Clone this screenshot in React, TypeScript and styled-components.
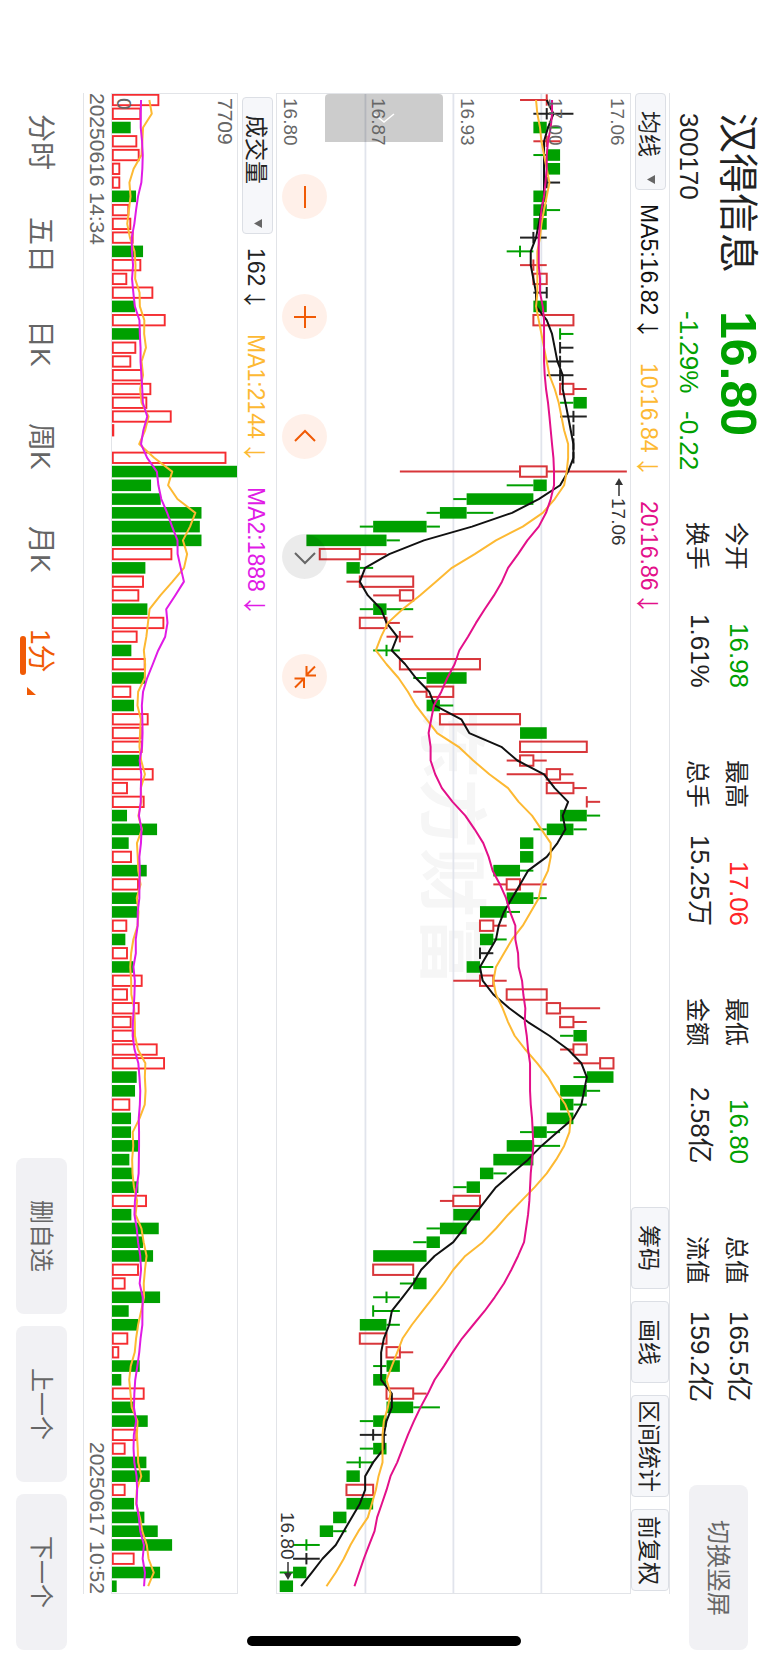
import React from "react";
import styled, { createGlobalStyle } from "styled-components";

/* The phone is held in landscape: every line of text runs top to bottom and
   blocks stack from right to left, so the page uses a sideways writing mode. */

const GREEN = "#00a000";
const RED = "#ff2426";
const CANDLE_RED = "#d8363a";
const AMBER = "#fdb933";
const PINK = "#e3108a";
const MAGENTA = "#e01be6";
const ORANGE = "#f05a05";
const INK = "#222222";
const GREY = "#666666";
const LINE = "#e2e4e8";

const GlobalStyle = createGlobalStyle`
  * { box-sizing: border-box; }
  html, body { margin: 0; padding: 0; background: #ffffff; }
  button, select {
    margin: 0;
    font: inherit;
    color: inherit;
    writing-mode: inherit;
    text-orientation: inherit;
    cursor: pointer;
  }
`;

const Page = styled.div`
  position: relative;
  display: flex;
  flex-direction: column;
  writing-mode: vertical-rl;
  text-orientation: sideways;
  width: 100%;
  height: 100vh;
  min-height: 1640px;
  min-width: 700px;
  background: #ffffff;
  color: ${INK};
  font-family: "Liberation Sans", "Noto Sans CJK SC", sans-serif;
  font-size: 24px;
  line-height: 1;
  white-space: nowrap;
`;

/* ---------- quote header ---------- */

const Header = styled.header`
  display: flex;
  align-items: flex-start;
  flex: 0 0 98px;
  padding-top: 113px;
  padding-bottom: 13px;
`;

const Identity = styled.div`
  display: grid;
  grid-template-columns: 198px auto;
  grid-template-rows: 60px 38px;
  flex: 0 0 409px;
`;

const StockName = styled.h1`
  margin: 0;
  font-size: 40px;
  font-weight: 400;
  line-height: 60px;
`;

const LastPrice = styled.strong`
  color: ${GREEN};
  font-size: 50px;
  font-weight: 700;
  line-height: 60px;
`;

const SubText = styled.span<{ $color?: string }>`
  display: flex;
  gap: 18px;
  color: ${(p) => p.$color || INK};
  font-size: 26px;
  line-height: 38px;
`;

const Stats = styled.div`
  display: flex;
  gap: 72px;
  margin-right: 10px;
`;

const StatGroup = styled.dl`
  height: 166px;
  margin: 0;
`;

const Stat = styled.div`
  display: flex;
  justify-content: space-between;
  line-height: 39px;
`;

const StatLabel = styled.dt`
  padding-right: 4px;
  font-size: 24px;
  line-height: 35px;
`;

const StatValue = styled.dd<{ $color?: string }>`
  margin: 0;
  color: ${(p) => p.$color || INK};
  font-size: 26px;
`;

const SoftButton = styled.button<{ $thick: number }>`
  width: ${(p) => p.$thick}px;
  padding: 0 2px 0 0;
  border: 0;
  border-radius: 8px;
  background: #f1f1f4;
  color: ${GREY};
  font-size: 24px;
`;

const RotateButton = styled(SoftButton)`
  height: 165px;
  margin-top: auto;
  margin-right: 20px;
`;

/* ---------- charts ---------- */

const Main = styled.main`
  display: flex;
  flex-direction: column;
  flex: 1 1 0;
  margin-top: 93px;
  margin-bottom: 69px;
  border-right: 1px solid ${LINE};
  border-left: 1px solid ${LINE};
`;

const Toolbar = styled.div`
  display: flex;
  align-items: center;
  flex: 0 0 38px;
  font-size: 23px;
`;

const SelectBox = styled.label<{ $length: number; $start: number }>`
  position: relative;
  display: block;
  width: 31px;
  height: ${(p) => p.$length}px;
  margin-top: ${(p) => p.$start}px;
  margin-bottom: 14px;
`;

const Select = styled.select`
  appearance: none;
  width: 100%;
  height: 100%;
  padding: 17px 4px 0 0;
  border: 1px solid #dcdfe5;
  border-radius: 4px;
  background: #f6f7fa;
  font-size: 23px;
  line-height: 25px;
`;

const Caret = styled.svg`
  position: absolute;
  bottom: 6px;
  left: 12px;
  width: 8px;
  height: 9px;
  pointer-events: none;
`;

const Reading = styled.span<{ $color: string }>`
  display: flex;
  align-items: center;
  gap: 2px;
  padding-right: 4px;
  margin-bottom: 23px;
  color: ${(p) => p.$color};
`;

const Arrow = styled.span`
  font-family: "Noto Sans CJK SC", sans-serif;
`;

const ToolButtons = styled.div`
  display: flex;
  align-self: stretch;
  gap: 12px;
  margin-top: auto;
  margin-bottom: 3px;
`;

const ToolButton = styled.button`
  width: 38px;
  min-height: 82px;
  padding: 4px 4px 4px 0;
  border: 1px solid #dcdfe5;
  border-radius: 4px;
  background: #f6f7fa;
  font-size: 23px;
`;

const Plot = styled.section<{ $share: number }>`
  position: relative;
  flex: ${(p) => p.$share} 1 0;
  border: 1px solid ${LINE};
`;

const Drawing = styled.svg`
  position: absolute;
  inset: 0;
  width: 100%;
  height: 100%;
`;

const Watermark = styled.div`
  position: absolute;
  inset: 0;
  display: flex;
  align-items: center;
  justify-content: center;
  padding: 8px 6px 0 0;
  color: #f6f6f6;
  font-size: 69px;
  font-weight: 700;
`;

const Scale = styled.div`
  position: absolute;
  inset: 0;
  display: flex;
  flex-direction: column;
  padding-top: 4px;
  color: ${GREY};
  font-size: 19px;
  line-height: 26px;
  pointer-events: none;
`;

const Band = styled.div`
  display: flex;
  flex-direction: column;
  justify-content: space-between;
  flex: 1 1 0;

  &:not(:first-child) {
    justify-content: flex-end;
  }
`;

const VolumeScale = styled(Scale)`
  justify-content: space-between;
  font-size: 21px;
  line-height: 24px;
`;

const Handle = styled.button`
  position: absolute;
  top: 0;
  right: 187px;
  display: flex;
  align-items: center;
  justify-content: center;
  width: 118px;
  height: 48px;
  padding: 0;
  border: 0;
  border-radius: 4px 4px 0 0;
  background: rgba(0, 0, 0, 0.2);
`;

const Controls = styled.div`
  position: absolute;
  top: 80px;
  left: 5px;
  display: flex;
  gap: 75px;
`;

const RoundButton = styled.button<{ $muted?: boolean }>`
  display: flex;
  align-items: center;
  justify-content: center;
  width: 45px;
  height: 45px;
  padding: 0;
  border: 0;
  border-radius: 50%;
  background: ${(p) => (p.$muted ? "rgba(0, 0, 0, 0.08)" : "rgba(252, 92, 10, 0.09)")};
  color: ${(p) => (p.$muted ? GREY : ORANGE)};
`;

const Marker = styled.div`
  position: absolute;
  display: flex;
  align-items: center;
  gap: 2px;
  color: #333333;
  font-size: 19px;
`;

const HighMarker = styled(Marker)`
  top: 25.6%;
  right: 2px;
`;

const LowMarker = styled(Marker)`
  bottom: 13px;
  left: 1px;
`;

const Dates = styled.div`
  display: flex;
  justify-content: space-between;
  flex: 0 0 27px;
  color: ${GREY};
  font-size: 21px;
  line-height: 27px;
`;

/* ---------- period tabs ---------- */

const Footer = styled.footer`
  display: flex;
  align-items: center;
  justify-content: space-between;
  flex: 0 0 83px;
  padding-top: 114px;
  padding-bottom: 13px;
`;

const Tabs = styled.nav`
  display: flex;
  gap: 47px;
  padding-right: 4px;
`;

const Tab = styled.button<{ $active?: boolean }>`
  position: relative;
  height: 56px;
  padding: 0;
  border: 0;
  background: none;
  color: ${(p) => (p.$active ? ORANGE : GREY)};
  font-size: 28px;
  line-height: 32px;
  text-align: start;
`;

const Underline = styled.span`
  position: absolute;
  top: 7px;
  left: -4px;
  width: 6px;
  height: 39px;
  border-radius: 3px;
  background: ${ORANGE};
`;

const Corner = styled.svg`
  position: absolute;
  top: 58px;
  left: 3px;
  width: 9px;
  height: 8px;
`;

const Actions = styled.div`
  display: flex;
  gap: 12px;
`;

const ActionButton = styled(SoftButton)`
  height: 156px;
`;

const HomeBar = styled.div`
  position: absolute;
  bottom: 17px;
  left: 50%;
  width: 274px;
  height: 10px;
  margin-left: -137px;
  border-radius: 5px;
  background: #000000;
`;

/* ---------- data ---------- */

/* colour, low, body bottom, body top, high, all in cents above 16.80 */
type Candle = [string, number, number, number, number];

const candles: Candle[] = `
r18,20,20,20 k19,20,20,22 g19,19,20,21 r19,20,20,21 g19,20,21,21 g20,20,21,21 k20,20,20,21 g19,19,20,20
g19,19,20,21 g19,19,20,20 k18,19,19,20 g17,18,18,19 r18,19,19,20 r19,19,20,20 k19,20,20,20 g19,19,20,20
r19,19,22,22 g21,21,21,22 k21,21,21,22 k20,21,21,22 k20,21,21,22 r21,21,22,23 g21,22,23,23 k21,22,22,23
k22,22,22,22 k22,22,22,22 k22,22,22,22 r9,18,20,26 g17,19,20,20 g13,14,19,19 g11,12,14,16 g6,7,11,12
g2,2,8,9 r3,3,6,8 g5,5,6,7 r5,6,10,10 r7,9,10,10 g6,7,8,10 r6,6,8,9 r8,9,9,10
g7,8,8,9 r9,9,15,15 g10,11,14,14 r10,11,13,13 g11,11,12,13 r12,12,18,18 g18,18,20,20 r18,18,23,23
r17,18,19,20 r17,20,21,22 r20,20,22,23 r23,23,23,24 g21,21,23,24 g19,20,22,23 g18,18,19,19 g18,18,19,19
g16,16,18,19 r16,17,18,20 g17,17,19,20 g15,15,17,18 r15,15,16,17 g15,15,16,17 k15,15,15,16 g14,14,15,16
r13,15,16,17 r17,17,20,20 r20,20,21,24 r21,21,22,23 g21,22,23,23 r21,22,23,23 r22,24,25,25 g22,23,25,25
g21,21,23,24 g21,21,22,23 g20,20,22,22 g18,19,20,21 g17,17,19,21 g16,16,19,19 g15,15,16,17 g13,14,15,15
r12,13,15,15 g13,13,15,15 g11,12,14,14 g10,11,12,12 g7,7,11,11 r7,7,10,10 g9,10,11,11 g7,8,8,9
g7,7,7,9 g6,6,8,9 r6,6,8,8 r8,8,9,10 g7,8,9,9 g7,7,8,8 r8,8,10,11 g8,8,10,12
g6,7,8,8 k6,7,7,8 g6,7,8,8 g5,6,6,7 g5,5,6,6 r5,5,7,7 g5,5,7,7 g4,4,5,5
g3,3,4,5 g1,2,2,3 k1,2,2,3 g0,1,2,2 g0,0,1,1`
  .trim()
  .split(/\s+/)
  .map((s) => [s[0], ...s.slice(1).split(",").map(Number)] as Candle);

/* direction and traded volume, in units where the 7709 peak is 375 */
type Volume = [string, number];

const volumes: Volume[] = `
r141 r87 g56 r75 r82 r24 r24 g72 r51 r57 r64 g93 r87 r45 r123 g69 r160 g85 r72 r57 r91 r117 r105 r178 r6 r0
r342 g375 g117 g146 g268 g263 g268 r180 g100 r95 r81 g106 r156 r76 g58 r100 g100 r57 g66 r109 r88 r91 g82
r124 r47 r97 g45 g135 g50 r59 g104 r80 g77 g77 r45 g40 r47 g64 r91 r47 r82 r58 r66 r136 r158 g74 g69 r54
g57 g57 g81 g52 g60 g79 r104 g58 g140 g93 g123 r80 r40 g144 g50 g78 r48 r21 g83 g28 r97 g67 g107 r75 r40
g103 g113 r40 g66 g97 g137 g180 r67 g144 g14`
  .trim()
  .split(/\s+/)
  .map((s) => [s[0], Number(s.slice(1))] as Volume);

const LENGTH = 1501;
const rowY = (i: number) => 6 + i * 13.78;
const priceX = (cents: number) => 2.7 + cents * 13.36;
const volumeX = (v: number) => v / 3;

/* The first points need bars from before the visible range, so they are given. */
const average = (values: number[], span: number, lead: number[]) =>
  values.map((_, i) =>
    i < lead.length
      ? lead[i]
      : values.slice(i - span + 1, i + 1).reduce((a, b) => a + b, 0) / span
  );

const toPoints = (values: number[], scale: (v: number) => number) =>
  values.map((v, i) => `${scale(v).toFixed(1)},${rowY(i).toFixed(1)}`).join(" ");

const closes = candles.map((c) => (c[0] === "r" ? c[3] : c[2]));
const traded = volumes.map((v) => v[1]);

const ma5 = average(closes, 5, [20, 20.5, 20.1, 19.8]);
const ma10 = average(closes, 10, [19.2, 19.3, 19.5, 19.6, 19.8, 20, 20.2, 20, 19.8]);
const ma20 = average(closes, 20, [
  20.4, 20.4, 20.3, 20.1, 20, 20, 19.9, 19.8, 19.6, 19.5, 19.4, 19.4, 19.4, 19.5, 19.5, 19.7, 19.8, 19.8, 19.8,
]);
const volumeMa1 = average(traded, 5, [112, 119, 93, 91]);
const volumeMa2 = average(traded, 10, [87, 86, 86, 90, 92, 91, 88, 78, 72]);

const candleColor: Record<string, string> = { r: CANDLE_RED, g: GREEN, k: "#222222" };

function PriceDrawing() {
  return (
    <Drawing viewBox={`0 0 353 ${LENGTH}`} preserveAspectRatio="none" aria-hidden="true">
      {[88.5, 176.5, 264.5].map((x) => (
        <line key={x} x1={x} x2={x} y1={0} y2={LENGTH} stroke="#e1e4ec" strokeWidth={1.8} />
      ))}
      {candles.map(([kind, low, bottom, top, high], i) => {
        const y = rowY(i);
        const color = candleColor[kind];
        return (
          <g key={i} stroke={color} strokeWidth={2} fill="none">
            {low < bottom && <line x1={priceX(low)} x2={priceX(bottom)} y1={y} y2={y} />}
            {high > top && <line x1={priceX(top)} x2={priceX(high)} y1={y} y2={y} />}
            {bottom === top && <line x1={priceX(top)} x2={priceX(top)} y1={y - 5.7} y2={y + 5.7} />}
            {bottom < top && kind === "r" && (
              <rect x={priceX(bottom)} y={y - 5.2} width={priceX(top) - priceX(bottom)} height={10.4} />
            )}
            {bottom < top && kind !== "r" && (
              <rect
                x={priceX(bottom)}
                y={y - 5.8}
                width={priceX(top) - priceX(bottom)}
                height={11.6}
                fill={color}
                stroke="none"
              />
            )}
          </g>
        );
      })}
      <g fill="none" strokeWidth={2} strokeLinejoin="round">
        <polyline points={toPoints(ma5, priceX)} stroke="#111111" />
        <polyline points={toPoints(ma10, priceX)} stroke={AMBER} />
        <polyline points={toPoints(ma20, priceX)} stroke={PINK} />
      </g>
    </Drawing>
  );
}

function VolumeDrawing() {
  return (
    <Drawing viewBox={`0 0 125 ${LENGTH}`} preserveAspectRatio="none" aria-hidden="true">
      {volumes.map(([kind, v], i) => {
        const y = rowY(i);
        if (v === 0) return null;
        return kind === "r" ? (
          <rect
            key={i}
            x={0.8}
            y={y - 5.2}
            width={Math.max(volumeX(v) - 1.5, 0.5)}
            height={10.4}
            fill="none"
            stroke="#f52c30"
            strokeWidth={1.9}
          />
        ) : (
          <rect key={i} x={0} y={y - 5.8} width={volumeX(v)} height={11.6} fill={GREEN} />
        );
      })}
      <g fill="none" strokeWidth={2} strokeLinejoin="round">
        <polyline points={toPoints(volumeMa1, volumeX)} stroke={AMBER} />
        <polyline points={toPoints(volumeMa2, volumeX)} stroke={MAGENTA} />
      </g>
    </Drawing>
  );
}

/* ---------- icons ---------- */

function Glyph({ d }: { d: string }) {
  return (
    <svg width="24" height="24" viewBox="0 0 24 24" fill="none" stroke="currentColor" strokeWidth="2" aria-hidden="true">
      <path d={d} />
    </svg>
  );
}

const controls = [
  { name: "缩小", d: "M12 1v22" },
  { name: "放大", d: "M12 1v22M1 12h22" },
  { name: "左移", d: "M2 16 12 6l10 10" },
  { name: "右移", d: "M2 8l10 10L22 8", muted: true },
  { name: "收起", d: "M22 1.5 13.5 10M13.5 1v9.5h9.5M2 22.5l8.5-8.5M1.5 13.5H11V23" },
];

const stats = [
  [{ label: "今开", value: "16.98", color: GREEN }, { label: "换手", value: "1.61%" }],
  [{ label: "最高", value: "17.06", color: RED }, { label: "总手", value: "15.25万" }],
  [{ label: "最低", value: "16.80", color: GREEN }, { label: "金额", value: "2.58亿" }],
  [{ label: "总值", value: "165.5亿" }, { label: "流值", value: "159.2亿" }],
] as { label: string; value: string; color?: string }[][];

function Dropdown({ label, length, start }: { label: string; length: number; start: number }) {
  return (
    <SelectBox $length={length} $start={start}>
      <Select aria-label={label} defaultValue={label}>
        <option>{label}</option>
      </Select>
      <Caret viewBox="0 0 8 9" aria-hidden="true">
        <path d="M8 0v9L0 4.5z" fill={GREY} />
      </Caret>
    </SelectBox>
  );
}

function Trend({ text, color }: { text: string; color: string }) {
  return (
    <Reading $color={color}>
      <span>{text}</span>
      <Arrow>↓</Arrow>
    </Reading>
  );
}

export default function App() {
  return (
    <Page>
      <GlobalStyle />
      <Header>
        <Identity>
          <StockName>汉得信息</StockName>
          <LastPrice>16.80</LastPrice>
          <SubText>300170</SubText>
          <SubText $color={GREEN}>
            <span>-1.29%</span>
            <span>-0.22</span>
          </SubText>
        </Identity>
        <Stats>
          {stats.map((group) => (
            <StatGroup key={group[0].label}>
              {group.map((s) => (
                <Stat key={s.label}>
                  <StatLabel>{s.label}</StatLabel>
                  <StatValue $color={s.color}>{s.value}</StatValue>
                </Stat>
              ))}
            </StatGroup>
          ))}
        </Stats>
        <RotateButton $thick={59}>切换竖屏</RotateButton>
      </Header>

      <Main>
        <Toolbar>
          <Dropdown label="均线" length={97} start={0} />
          <Trend text="MA5:16.82" color="#111111" />
          <Trend text="10:16.84" color={AMBER} />
          <Trend text="20:16.86" color={PINK} />
          <ToolButtons>
            {["筹码", "画线", "区间统计", "前复权"].map((name) => (
              <ToolButton key={name}>{name}</ToolButton>
            ))}
          </ToolButtons>
        </Toolbar>

        <Plot $share={355}>
          <Watermark>东方财富</Watermark>
          <PriceDrawing />
          <Handle aria-label="展开">
            <svg width="22" height="10" viewBox="0 0 22 10" fill="none" stroke="#ffffff" strokeWidth="1.5" aria-hidden="true">
              <path d="M1 1l10 8L21 1" />
            </svg>
          </Handle>
          <Scale>
            <Band>
              <span>17.06</span>
              <span>17.00</span>
            </Band>
            <Band>16.93</Band>
            <Band>16.87</Band>
            <Band>16.80</Band>
          </Scale>
          <HighMarker>
            <svg width="8" height="18" viewBox="0 0 8 18" aria-hidden="true">
              <path d="M4 6v12" stroke="#333333" strokeWidth="1.5" />
              <path d="M4 0l4 7H0z" fill="#333333" />
            </svg>
            <span>17.06</span>
          </HighMarker>
          <LowMarker>
            <span>16.80</span>
            <svg width="8" height="18" viewBox="0 0 8 18" aria-hidden="true">
              <path d="M4 0v12" stroke="#333333" strokeWidth="1.5" />
              <path d="M4 18l4-7H0z" fill="#333333" />
            </svg>
          </LowMarker>
          <Controls>
            {controls.map((c) => (
              <RoundButton key={c.name} $muted={c.muted} aria-label={c.name}>
                <Glyph d={c.d} />
              </RoundButton>
            ))}
          </Controls>
        </Plot>

        <Toolbar>
          <Dropdown label="成交量" length={137} start={4} />
          <Trend text="162" color={INK} />
          <Trend text="MA1:2144" color={AMBER} />
          <Trend text="MA2:1888" color={MAGENTA} />
        </Toolbar>

        <Plot $share={126}>
          <VolumeDrawing />
          <VolumeScale>
            <span>7709</span>
            <span>0</span>
          </VolumeScale>
        </Plot>

        <Dates>
          <time>20250616 14:34</time>
          <time>20250617 10:52</time>
        </Dates>
      </Main>

      <Footer>
        <Tabs>
          {["分时", "五日", "日K", "周K", "月K"].map((name) => (
            <Tab key={name}>{name}</Tab>
          ))}
          <Tab $active>
            1分
            <Underline />
            <Corner viewBox="0 0 9 8" aria-hidden="true">
              <path d="M0 0v8h9z" fill={ORANGE} />
            </Corner>
          </Tab>
        </Tabs>
        <Actions>
          {["删自选", "上一个", "下一个"].map((name) => (
            <ActionButton key={name} $thick={51}>
              {name}
            </ActionButton>
          ))}
        </Actions>
      </Footer>
      <HomeBar />
    </Page>
  );
}
